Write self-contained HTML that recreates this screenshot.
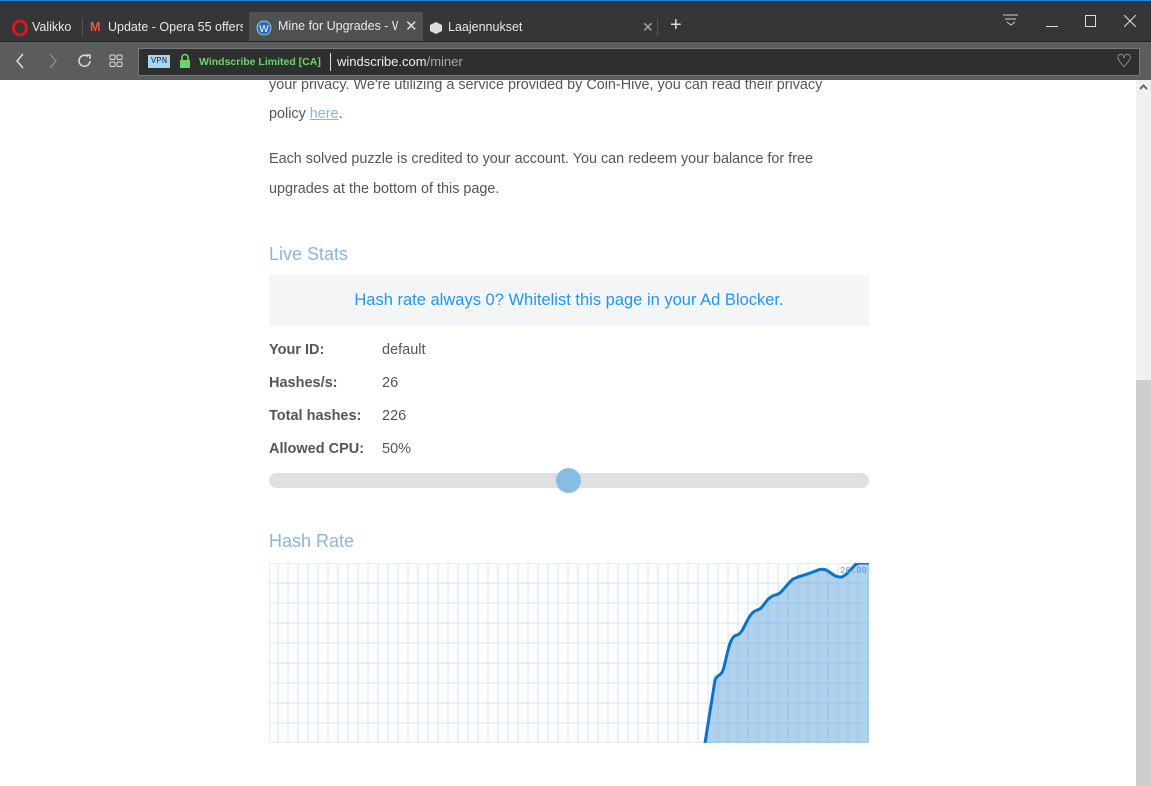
<!DOCTYPE html>
<html><head><meta charset="utf-8"><style>
*{margin:0;padding:0;box-sizing:border-box}
body{width:1151px;height:786px;overflow:hidden;background:#fff;font-family:"Liberation Sans",sans-serif;position:relative}
.top{position:absolute;left:0;top:0;width:1151px;height:41px;background:#353637;border-top:1px solid #1e88e5}
.tab{position:absolute;top:12px;height:29px;color:#e8e8e8;font-size:12.5px;line-height:29px;white-space:nowrap;overflow:hidden}
.addr{position:absolute;left:0;top:41px;width:1151px;height:39px;background:#5b5c5e;border-top:1px solid #222}
.field{position:absolute;left:138px;top:6px;width:1002px;height:28px;background:#2e3030;border:1px solid #777}
.page{position:absolute;left:0;top:80px;width:1136px;height:706px;background:#fff;overflow:hidden}
p{position:absolute;left:269px;font-size:14.4px;color:#555;line-height:30px;white-space:nowrap}
h3{position:absolute;left:269px;font-size:18px;font-weight:normal;color:#8ab6d6}
.lbl{position:absolute;left:269px;font-size:14.5px;font-weight:bold;color:#555}
.val{position:absolute;left:382px;font-size:14.5px;color:#555}
</style></head><body>
<div class="top">
 <div class="tab" style="left:10px;width:70px"><svg width="16" height="16" style="position:absolute;left:2px;top:7px"><ellipse cx="8" cy="8" rx="6.5" ry="7" fill="none" stroke="#e0141e" stroke-width="3"/></svg><span style="position:absolute;left:22px">Valikko</span></div>
 <div style="position:absolute;left:82px;top:17px;width:1px;height:18px;background:#555"></div>
 <div class="tab" style="left:88px;width:160px"><span style="position:absolute;left:2px;color:#e35b3c;font-weight:bold">M</span><span style="position:absolute;left:20px;width:135px;overflow:hidden">Update - Opera 55 offers b</span></div>
 <span class="tab" style="left:255px;color:#bbb;font-size:15px">✕</span>
 <div class="tab" style="left:249px;width:174px;background:#4e5052;top:11px;height:30px"><svg width="16" height="16" style="position:absolute;left:7px;top:8px"><circle cx="8" cy="8" r="7" fill="#2d6bc4" stroke="#9cc" stroke-width="1"/><text x="8" y="12" font-size="10" fill="#fff" text-anchor="middle" font-family="Liberation Sans">W</text></svg><span style="position:absolute;left:29px;width:120px;overflow:hidden">Mine for Upgrades - Wind</span><span style="position:absolute;left:156px;font-size:15px;color:#ddd">✕</span></div>
 <div class="tab" style="left:428px;width:170px"><svg width="14" height="14" style="position:absolute;left:1px;top:8px"><path d="M7 1L13 4V10L7 13L1 10V4Z" fill="#ddd"/></svg><span style="position:absolute;left:20px">Laajennukset</span></div>
 <span class="tab" style="left:642px;color:#aaa;font-size:14px">✕</span>
 <div style="position:absolute;left:657px;top:17px;width:1px;height:18px;background:#555"></div>
 <span class="tab" style="left:670px;top:10px;font-size:20px;color:#ddd">+</span>
 <svg style="position:absolute;left:1003px;top:13px" width="16" height="14"><path d="M0 1H15M2 5H13M4 8L8 11L12 8" stroke="#ccc" fill="none"/></svg>
 <div style="position:absolute;left:1046px;top:25px;width:12px;height:1px;background:#ddd"></div>
 <div style="position:absolute;left:1085px;top:14px;width:11px;height:12px;border:1px solid #ddd"></div>
 <svg style="position:absolute;left:1124px;top:14px" width="12" height="12"><path d="M0 0L12 12M12 0L0 12" stroke="#ddd"/></svg>
</div>
<div class="addr">
 <svg style="position:absolute;left:14px;top:11px" width="60" height="16"><path d="M9 1L3 8L9 15" stroke="#ddd" fill="none" stroke-width="1.5"/><path d="M36 1L42 8L36 15" stroke="#888" fill="none" stroke-width="1.5"/></svg>
 <svg style="position:absolute;left:77px;top:11px" width="16" height="16"><path d="M13 8A5.5 5.5 0 1 1 11 3.5" stroke="#ddd" fill="none" stroke-width="1.5"/><path d="M9 2H13V6" stroke="#ddd" fill="none" stroke-width="1.5"/></svg>
 <svg style="position:absolute;left:109px;top:12px" width="14" height="14"><rect x="1" y="1" width="5" height="4.5" rx="1" stroke="#ddd" fill="none"/><rect x="8" y="1" width="5" height="4.5" rx="1" stroke="#ddd" fill="none"/><rect x="1" y="8" width="5" height="4.5" rx="1" stroke="#ddd" fill="none"/><rect x="8" y="8" width="5" height="4.5" rx="1" stroke="#ddd" fill="none"/></svg>
 <div class="field">
  <div style="position:absolute;left:9px;top:6px;width:22px;height:13px;background:#a8d8f0;color:#235;font-size:9px;line-height:13px;text-align:center;font-family:'Liberation Mono',monospace">VPN</div>
  <svg style="position:absolute;left:40px;top:4px" width="12" height="16"><path d="M3 7V4.5A3 3 0 0 1 9 4.5V7" stroke="#6bd46b" fill="none" stroke-width="1.6"/><rect x="1" y="7" width="10" height="8" fill="#6bd46b"/></svg>
  <span style="position:absolute;left:60px;top:7px;font-size:10.5px;font-weight:bold;color:#6bd46b">Windscribe Limited [CA]</span>
  <div style="position:absolute;left:191px;top:4px;width:1px;height:18px;background:#ddd"></div>
  <span style="position:absolute;left:198px;top:5px;font-size:13px;color:#eee">windscribe.com<span style="color:#aaa">/miner</span></span>
  <span style="position:absolute;left:977px;top:2px;font-size:18px;color:#ddd">♡</span>
 </div>
</div>
<div class="page">
 <p style="top:-10px">your privacy. We're utilizing a service provided by Coin-Hive, you can read their privacy</p>
 <p style="top:19px">policy <span style="color:#8ab6d6;text-decoration:underline">here</span>.</p>
 <p style="top:64px">Each solved puzzle is credited to your account. You can redeem your balance for free</p>
 <p style="top:94px">upgrades at the bottom of this page.</p>
 <h3 style="top:164px">Live Stats</h3>
 <div style="position:absolute;left:269px;top:195px;width:600px;height:51px;background:#f4f5f7;color:#2196f3;font-size:16.5px;text-align:center;line-height:51px">Hash rate always 0? Whitelist this page in your Ad Blocker.</div>
 <div class="lbl" style="top:262px">Your ID:</div><div class="val" style="top:262px">default</div>
 <div class="lbl" style="top:295px">Hashes/s:</div><div class="val" style="top:295px">26</div>
 <div class="lbl" style="top:328px">Total hashes:</div><div class="val" style="top:328px">226</div>
 <div class="lbl" style="top:361px">Allowed CPU:</div><div class="val" style="top:361px">50%</div>
 <div style="position:absolute;left:269px;top:393px;width:600px;height:15px;background:#e0e0e0;border-radius:8px"></div>
 <div style="position:absolute;left:556px;top:388px;width:25px;height:25px;background:#85bde3;border-radius:50%"></div>
 <h3 style="top:451px">Hash Rate</h3>
 <svg style="position:absolute;left:269px;top:483px" width="600" height="180">
  <line x1="0.5" y1="0" x2="0.5" y2="180" stroke="#e1eefb" stroke-width="1.5"/>
  <path d="M0 0.5H600" stroke="#e1eefb"/>
  <g stroke="#dfecfa" stroke-width="1.5" fill="none">
  <path d="M9 0V180M19 0V180M29 0V180M39 0V180M49 0V180M59 0V180M69 0V180M79 0V180M89 0V180M99 0V180M109 0V180M119 0V180M129 0V180M139 0V180M149 0V180M159 0V180M169 0V180M179 0V180M189 0V180M199 0V180M209 0V180M219 0V180M229 0V180M239 0V180M249 0V180M259 0V180M269 0V180M279 0V180M289 0V180M299 0V180M309 0V180M319 0V180M329 0V180M339 0V180M349 0V180M359 0V180M369 0V180M379 0V180M389 0V180M399 0V180M409 0V180M419 0V180M429 0V180M439 0V180M449 0V180M459 0V180M469 0V180M479 0V180M489 0V180M499 0V180M509 0V180M519 0V180M529 0V180M539 0V180M549 0V180M559 0V180M569 0V180M579 0V180M589 0V180M599 0V180"/>
  <path d="M0 20H600M0 40H600M0 60H600M0 80H600M0 100H600M0 120H600M0 140H600M0 160H600M0 179.5H600"/>
  </g>
  <path d="M436 180L446 117C449 110 452 115 455 104C459 88 461 73 468 72C475 71 478 50 488 47C495 46 496 35 506 32C513 31 514 25 524 16C533 12 535 13 549 7C560 3 562 15 573 14C582 10 584 0 591 0H600V180Z" fill="rgba(100,165,220,0.5)"/>
  <path d="M436 180L446 117C449 110 452 115 455 104C459 88 461 73 468 72C475 71 478 50 488 47C495 46 496 35 506 32C513 31 514 25 524 16C533 12 535 13 549 7C560 3 562 15 573 14C582 10 584 0 591 0H600" fill="none" stroke="#0a72c8" stroke-width="3"/>
  <text x="571" y="10" font-size="9" fill="#5a9ad8" font-family="Liberation Mono">26.00</text>
 </svg>
</div>
<div style="position:absolute;left:1136px;top:80px;width:15px;height:706px;background:#f0f0f0"></div>
<div style="position:absolute;left:1136px;top:380px;width:15px;height:406px;background:#cdcdcd"></div>
<svg style="position:absolute;left:1139px;top:84px" width="9" height="6"><path d="M1 5L4.5 1.5L8 5" stroke="#666" stroke-width="2" fill="none"/></svg>
</body></html>
